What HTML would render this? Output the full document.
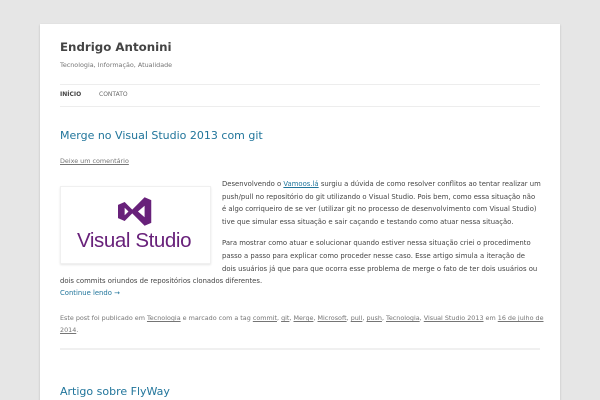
<!DOCTYPE html>
<html><head><meta charset="utf-8"><style>
body{margin:0;background:#e6e6e6;font-family:"DejaVu Sans","Liberation Sans",sans-serif;color:#444;}
.page{position:absolute;left:40px;top:24px;width:520px;height:376px;background:#fff;box-shadow:0 1px 2px rgba(0,0,0,.2)}
.a{position:absolute;white-space:nowrap}
a{color:#21759b}
.l{position:absolute;white-space:nowrap;font-size:6.85px;color:#444}
.meta{position:absolute;left:60px;top:312px;width:485px;font-size:6.4px;line-height:12px;color:#757575}
.meta a{color:#757575}
</style></head><body>
<div class="page"></div>
<div class="a" style="left:60px;top:40px;font-size:11.8px;font-weight:bold;color:#444">Endrigo Antonini</div>
<div class="a" style="left:60px;top:61px;font-size:6.4px;color:#757575">Tecnologia, Informação, Atualidade</div>
<div style="position:absolute;left:60px;top:84px;width:480px;border-top:1px solid #ededed"></div>
<div class="a" style="left:60px;top:91px;font-size:6px;font-weight:bold;color:#444">INÍCIO</div>
<div class="a" style="left:99px;top:91px;font-size:6px;color:#6a6a6a">CONTATO</div>
<div style="position:absolute;left:60px;top:106px;width:480px;border-top:1px solid #ededed"></div>
<div class="a" style="left:60px;top:129px;font-size:11px;color:#21759b">Merge no Visual Studio 2013 com git</div>
<div class="a" style="left:60px;top:157px;font-size:6.4px;color:#757575;text-decoration:underline">Deixe um comentário</div>
<div style="position:absolute;left:60px;top:186px;width:149px;height:76px;border:1px solid #f0f0f0;box-shadow:0 1px 2px rgba(0,0,0,.1)">
<svg style="position:absolute;left:57px;top:10px" width="38" height="29" viewBox="0 0 40 30"><path d="M0 8 L7 5 L15 13 L28 0 L35 3 L35 27 L28 30 L15 17 L7 25 L0 22 Z M7 11 L7 19 L11 15 Z M28 9 L21 15 L28 21 Z" fill="#68217a" fill-rule="evenodd"/></svg>
<div class="a" style="left:16px;top:42px;font-family:'Liberation Sans',sans-serif;font-size:20.5px;color:#68217a;letter-spacing:-0.4px">Visual Studio</div>
</div>
<div class="l" style="left:222px;top:180px">Desenvolvendo o <a href="#">Vamoos.lá</a> surgiu a dúvida de como resolver conflitos ao tentar realizar um</div>
<div class="l" style="left:222px;top:193px">push/pull no repositório do git utilizando o Visual Studio. Pois bem, como essa situação não</div>
<div class="l" style="left:222px;top:205px">é algo corriqueiro de se ver (utilizar git no processo de desenvolvimento com Visual Studio)</div>
<div class="l" style="left:222px;top:218px">tive que simular essa situação e sair caçando e testando como atuar nessa situação.</div>
<div class="l" style="left:222px;top:239px">Para mostrar como atuar e solucionar quando estiver nessa situação criei o procedimento</div>
<div class="l" style="left:222px;top:252px">passo a passo para explicar como proceder nesse caso. Esse artigo simula a iteração de</div>
<div class="l" style="left:222px;top:265px">dois usuários já que para que ocorra esse problema de merge o fato de ter dois usuários ou</div>
<div class="l" style="left:60px;top:277px">dois commits oriundos de repositórios clonados diferentes.</div>
<div class="l" style="left:60px;top:289px;color:#21759b">Continue lendo →</div>
<div class="meta">Este post foi publicado em <a href="#">Tecnologia</a> e marcado com a tag <a href="#">commit</a>, <a href="#">git</a>, <a href="#">Merge</a>, <a href="#">Microsoft</a>, <a href="#">pull</a>, <a href="#">push</a>, <a href="#">Tecnologia</a>, <a href="#">Visual Studio 2013</a> em <a href="#">16 de julho de 2014</a>.</div>
<div style="position:absolute;left:60px;top:348px;width:480px;border-top:2px solid #f0f0f0"></div>
<div class="a" style="left:60px;top:385px;font-size:11px;color:#21759b">Artigo sobre FlyWay</div>
</body></html>
